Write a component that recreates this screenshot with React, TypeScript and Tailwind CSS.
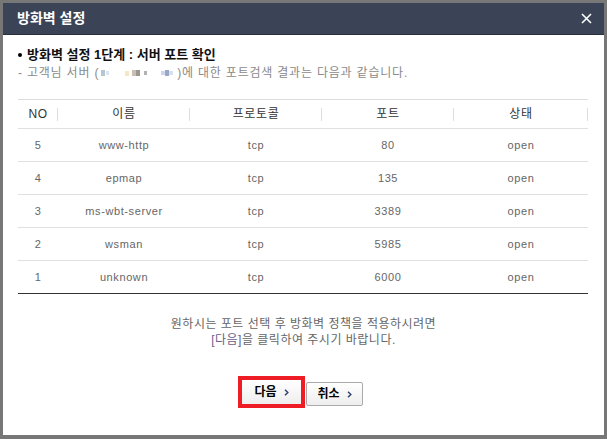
import React from "react"

const rows = [
  { no: 5, name: "www-http", proto: "tcp", port: 80, state: "open" },
  { no: 4, name: "epmap", proto: "tcp", port: 135, state: "open" },
  { no: 3, name: "ms-wbt-server", proto: "tcp", port: 3389, state: "open" },
  { no: 2, name: "wsman", proto: "tcp", port: 5985, state: "open" },
  { no: 1, name: "unknown", proto: "tcp", port: 6000, state: "open" },
]

const font = { fontFamily: '"Liberation Sans", "Noto Sans CJK KR", sans-serif' }

function Chevron() {
  return (
    <svg width="5" height="7" viewBox="0 0 5 7" className="ml-[7px]">
      <path d="M1 0.8 L3.8 3.5 L1 6.2" fill="none" stroke="#34466c" strokeWidth="1.5" />
    </svg>
  )
}

// 마스킹된 IP 영역
function MaskedIp() {
  return (
    <span className="mx-[2px] inline-flex h-[10px] w-[74px] items-center align-middle">
      <span className="h-[6px] w-[4px] bg-[#b8c4d0]" />
      <span className="ml-[1px] h-[4px] w-[3px] bg-[#d8e6f2]" />
      <span className="ml-[16px] h-[5px] w-[4px] bg-[#f7e6c4]" />
      <span className="ml-[3px] h-[6px] w-[4px] bg-[#c9bfb3]" />
      <span className="h-[6px] w-[4px] bg-[#9c9590]" />
      <span className="ml-[4px] h-[4px] w-[3px] bg-[#b2b2b2]" />
      <span className="ml-[14px] h-[4px] w-[4px] bg-[#c9d8ec]" />
      <span className="h-[6px] w-[4px] bg-[#9aa8c4]" />
      <span className="h-[4px] w-[4px] bg-[#d4e2f0]" />
    </span>
  )
}

export default function App() {
  return (
    <div className="h-[439px] w-[607px] bg-[#777777] pt-[3px] pl-[3px] pr-[3px] pb-[4px]" style={font}>
      <div className="flex h-full flex-col bg-white">
        {/* 헤더 */}
        <div className="flex h-[32px] items-center justify-between border-b border-[#2a2f3a] bg-[#3b4356] pl-[14px] pr-[12px]">
          <span className="text-[14px] font-bold text-white">방화벽 설정</span>
          <svg width="11" height="11" viewBox="0 0 11 11">
            <path d="M1 1 L10 10 M10 1 L1 10" stroke="#fff" strokeWidth="1.6" />
          </svg>
        </div>

        <div className="px-[15px] pt-[11px]">
          <div className="flex h-[18px] items-center text-[13px] font-bold text-[#111]">
            <span className="mr-[5px] inline-block h-[4px] w-[4px] rounded-full bg-black" />
            방화벽 설정 1단계 : 서버 포트 확인
          </div>
          <div className="flex h-[18px] items-center text-[12px] tracking-[0.8px] text-[#8a8a8a]">
            - 고객님 서버 (<MaskedIp />)에 대한 포트검색 결과는 다음과 같습니다.
          </div>

          {/* 포트 목록 */}
          <table className="mt-[17px] w-[570px] table-fixed border-collapse border-t border-b border-t-[#dddddd] border-b-[#333333] text-[11px] tracking-[0.6px]">
            <colgroup>
              <col className="w-[40px]" />
              <col className="w-[132px]" />
              <col className="w-[132px]" />
              <col className="w-[132px]" />
              <col className="w-[134px]" />
            </colgroup>
            <thead>
              <tr className="h-[29px] border-b border-[#e0e0e0] text-[12px] text-[#333]">
                {["NO", "이름", "프로토콜", "포트", "상태"].map((h) => (
                  <th key={h} className="relative p-0 text-center font-normal">
                    {h}
                    <span className="absolute top-[8px] right-0 h-[13px] w-px bg-[#dddddd]" />
                  </th>
                ))}
              </tr>
            </thead>
            <tbody className="text-[#666]">
              {rows.map((r, i) => (
                <tr key={r.no} className={`h-[33px] ${i < rows.length - 1 ? "border-b border-[#e0e0e0]" : ""}`}>
                  <td className="p-0 text-center">{r.no}</td>
                  <td className="p-0 text-center">{r.name}</td>
                  <td className="p-0 text-center">{r.proto}</td>
                  <td className="p-0 text-center">{r.port}</td>
                  <td className="p-0 text-center">{r.state}</td>
                </tr>
              ))}
            </tbody>
          </table>

          <div className="mt-[22px] text-center text-[12px] leading-[16px] tracking-[0.5px] text-[#666]">
            <p>원하시는 포트 선택 후 방화벽 정책을 적용하시려면</p>
            <p>
              <span className="text-[#6a5f88]">[다음]</span>을 클릭하여 주시기 바랍니다.
            </p>
          </div>

          <div className="mt-[28px] flex items-start justify-center pr-[6px]">
            <div className="border-[4px] border-[#ee1c25]">
              <button className="flex h-[24px] w-[59px] items-center justify-center bg-gradient-to-b from-white to-[#eeeeee] text-[12px] font-bold text-black">
                다음
                <Chevron />
              </button>
            </div>
            <button className="mt-[6px] ml-px flex h-[24px] w-[57px] items-center justify-center rounded-[2px] border border-[#aaaaaa] bg-gradient-to-b from-white to-[#eeeeee] text-[12px] font-bold text-black">
              취소
              <Chevron />
            </button>
          </div>
        </div>
      </div>
    </div>
  )
}
